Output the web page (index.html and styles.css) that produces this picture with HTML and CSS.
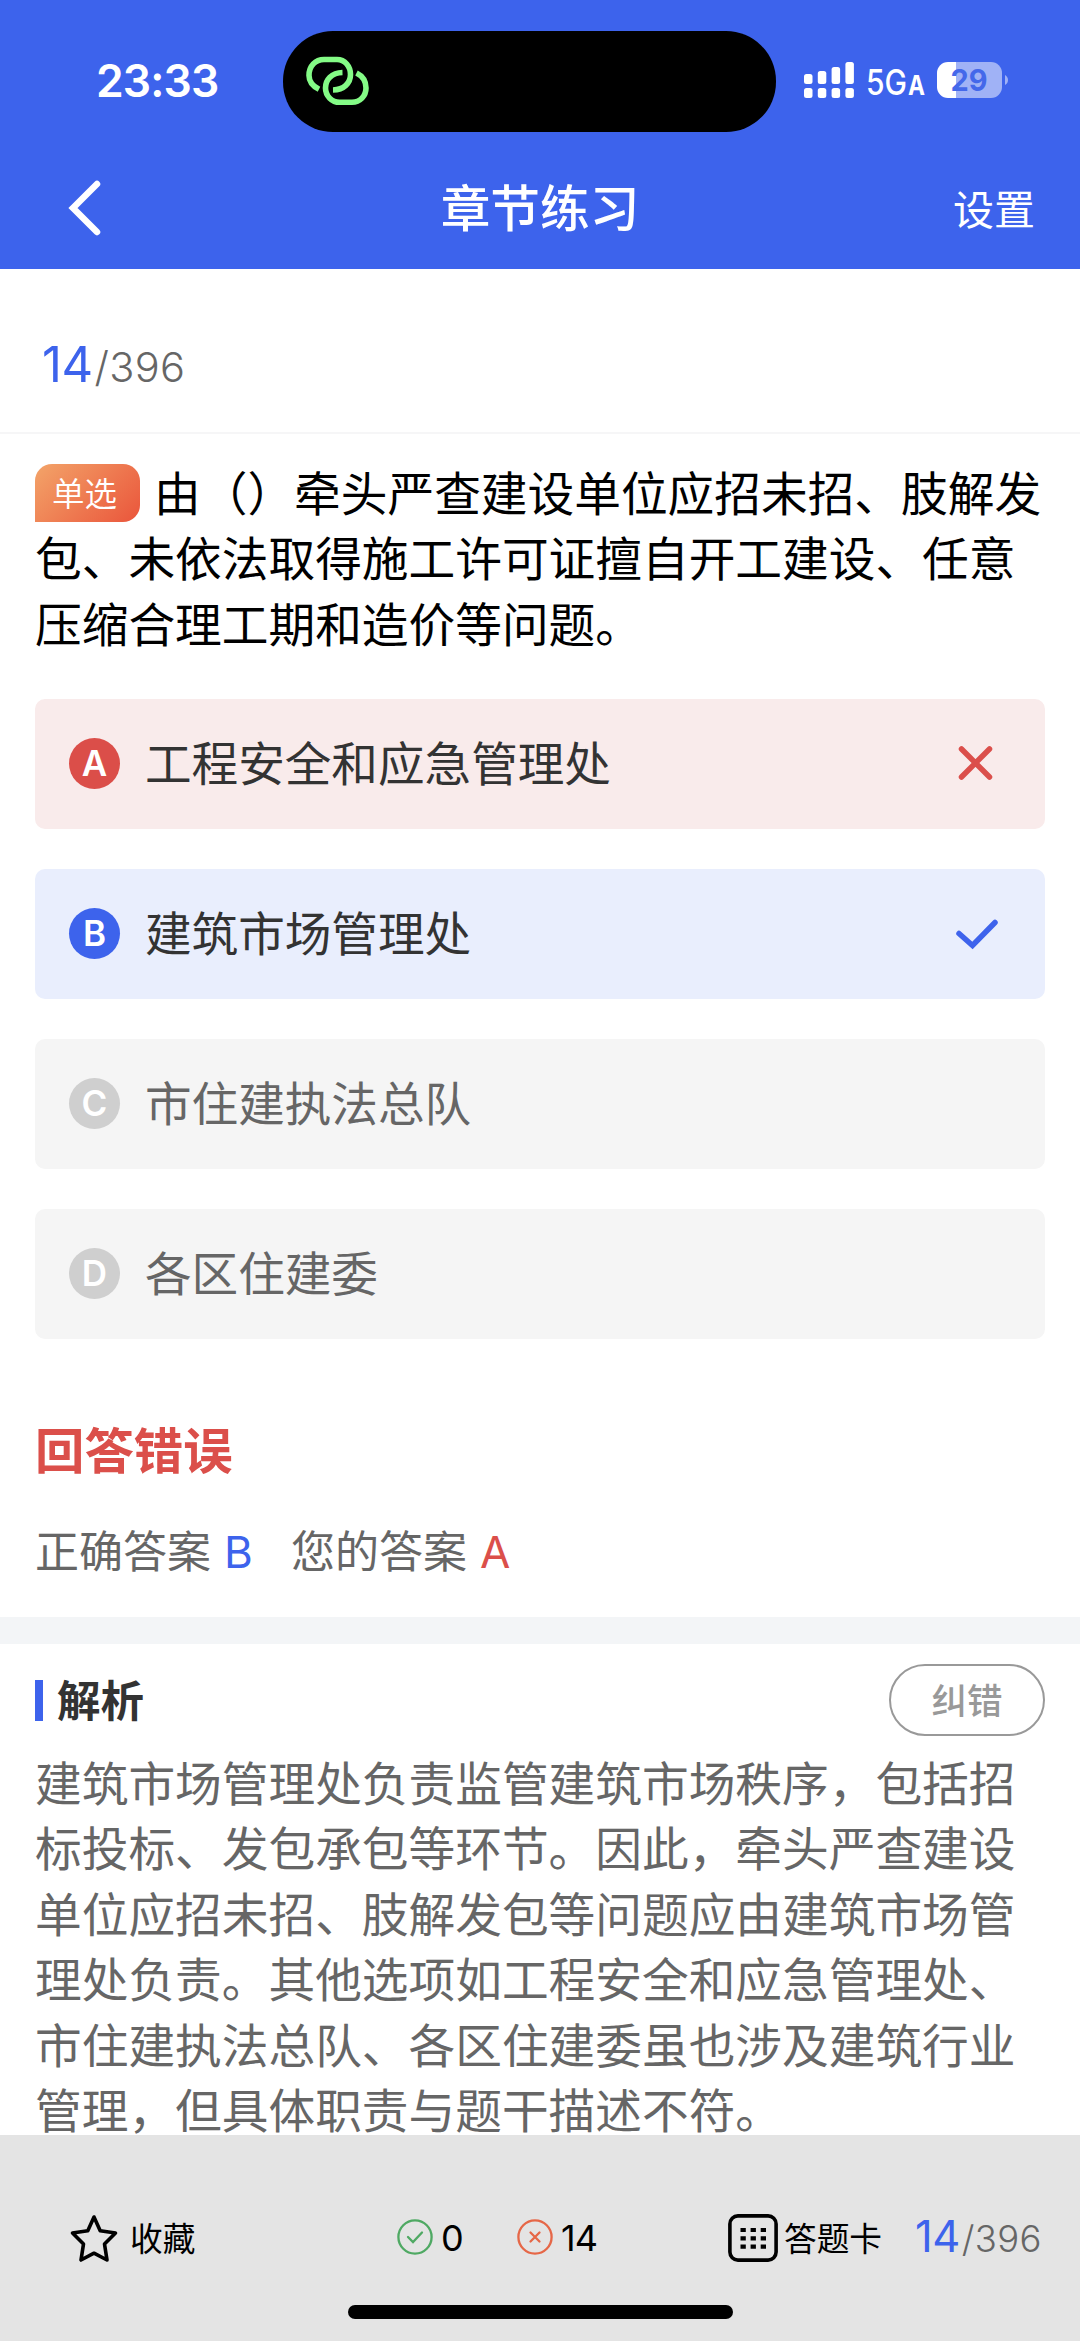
FILE: index.html
```html
<!DOCTYPE html>
<html lang="zh-CN">
<head>
<meta charset="utf-8">
<title>章节练习</title>
<link rel="stylesheet" href="styles.css">
</head>
<body>
<div class="app">
  <header class="header">
    <div class="status">
      <span class="clock">23:33</span>
      <div class="island">
        <svg class="link" width="64" height="50" viewBox="0 0 64 50" fill="none" stroke="#84fb86" stroke-width="5.6">
          <path d="M13 33.3C6.500 30 3 25 3 19.500C3 10 9.500 3.500 18 3.500H31C39 3.500 44.500 10.500 44.500 18.500C44.500 27 38 33.800 27 34"/>
          <path d="M36.500 16.500C25.500 16.700 19.500 24 19.500 32C19.500 40 26 46.300 33.500 46.300H46C54 46.300 60 40 60 32C60 25 56.500 20 50.500 17"/>
        </svg>
      </div>
      <svg class="signal" width="50" height="36" viewBox="0 0 50 36" fill="#fff">
        <rect x="0" y="12" width="8.500" height="10" rx="2.500"/><rect x="13.800" y="9" width="8.500" height="13" rx="2.500"/>
        <rect x="27.600" y="5" width="8.500" height="17" rx="2.500"/><rect x="41.400" y="0" width="8.500" height="22" rx="2.500"/>
        <rect x="0" y="26" width="8.500" height="10" rx="2.500"/><rect x="13.800" y="26" width="8.500" height="10" rx="2.500"/>
        <rect x="27.600" y="26" width="8.500" height="10" rx="2.500"/><rect x="41.400" y="26" width="8.500" height="10" rx="2.500"/>
      </svg>
      <svg class="network" width="60" height="36" viewBox="0 0 60 36" fill="#fff">
        <text x="0" y="33" font-size="35.500" textLength="41" lengthAdjust="spacingAndGlyphs">5G</text>
        <text class="semi" x="42" y="33" font-size="27" textLength="17" lengthAdjust="spacingAndGlyphs">A</text>
      </svg>
      <svg class="battery" width="72" height="36" viewBox="0 0 72 36">
        <path d="M11 0H19V36H11A11 11 0 0 1 0 25V11A11 11 0 0 1 11 0Z" fill="#fff"/>
        <path d="M19 0H54A11 11 0 0 1 65 11V25A11 11 0 0 1 54 36H19Z" fill="#a0b2f6"/>
        <path d="M68 13C72 15 72 21 68 23Z" fill="#a0b2f6"/>
        <text class="semi" x="13.500" y="29" font-size="30" fill="#4468ea" textLength="37" lengthAdjust="spacingAndGlyphs">29</text>
      </svg>
    </div>
    <nav class="nav">
      <svg class="back" width="34" height="56" viewBox="0 0 34 56" fill="none" stroke="#fff" stroke-width="6.500" stroke-linecap="round"><path d="M29 4L5 28L29 52"/></svg>
      <h1 class="title">章节练习</h1>
      <span class="settings">设置</span>
    </nav>
  </header>

  <main class="content">
    <div class="progress"><span class="now">14</span><span class="all">/396</span></div>

    <section class="question">
      <p class="stem"><span class="tag">单选</span>由（）牵头严查建设单位应招未招、肢解发包、未依法取得施工许可证擅自开工建设、任意压缩合理工期和造价等问题。</p>
      <ul class="options">
        <li class="option wrong"><span class="letter">A</span><span class="label">工程安全和应急管理处</span>
          <svg class="mark" width="44" height="44" viewBox="0 0 44 44" fill="none" stroke="#db4f4b" stroke-width="5.500" stroke-linecap="round"><path d="M7.500 7L35.500 35M35.500 7L7.500 35"/></svg></li>
        <li class="option right"><span class="letter">B</span><span class="label">建筑市场管理处</span>
          <svg class="mark" width="44" height="44" viewBox="0 0 44 44" fill="none" stroke="#3e63ec" stroke-width="5.500" stroke-linecap="round"><path d="M5 21.500L18.500 33.500L41 10.500"/></svg></li>
        <li class="option"><span class="letter">C</span><span class="label">市住建执法总队</span></li>
        <li class="option"><span class="letter">D</span><span class="label">各区住建委</span></li>
      </ul>
      <h2 class="verdict">回答错误</h2>
      <div class="answers">
        <span>正确答案</span><b class="correct">B</b><span>您的答案</span><b class="yours">A</b>
      </div>
    </section>

    <section class="analysis">
      <div class="analysis-head">
        <h3 class="analysis-title"><span>解析</span></h3>
        <button class="report">纠错</button>
      </div>
      <p class="analysis-text">建筑市场管理处负责监管建筑市场秩序，包括招标投标、发包承包等环节。因此，牵头严查建设单位应招未招、肢解发包等问题应由建筑市场管理处负责。其他选项如工程安全和应急管理处、市住建执法总队、各区住建委虽也涉及建筑行业管理，但具体职责与题干描述不符。</p>
    </section>
  </main>

  <footer class="footer">
    <div class="toolbar">
      <svg class="star" width="48" height="48" viewBox="0 0 48 48" fill="none" stroke="#000" stroke-width="3.600" stroke-linejoin="round"><path d="M24 3L30.200 16.700L45.500 19L34.500 30L37 46L24 39.200L11 46L13.500 30L2.500 19L17.800 16.700Z"/></svg>
      <span class="tool fav">收藏</span>
      <svg width="36" height="36" viewBox="0 0 36 36" fill="none" stroke="#4fa963" stroke-width="2.300" stroke-linecap="round"><circle cx="18" cy="17" r="16.600"/><path d="M11 17L16 22L25 12.500"/></svg>
      <span class="count ok">0</span>
      <svg width="36" height="36" viewBox="0 0 36 36" fill="none" stroke="#e66747" stroke-width="2.300" stroke-linecap="round"><circle cx="18" cy="17" r="16.600"/><path d="M13.500 12.500L22.500 21.500M22.500 12.500L13.500 21.500"/></svg>
      <span class="count bad">14</span>
      <svg width="50" height="48" viewBox="0 0 50 48"><rect x="1.900" y="1.900" width="46.200" height="44.200" rx="8" fill="none" stroke="#000" stroke-width="3.600"/>
        <path d="M12.500 16H38.500M12.500 24.300H38.500M12.500 32.600H38.500" stroke="#000" stroke-width="4.200" stroke-dasharray="5.300 4.800"/></svg>
      <span class="tool card">答题卡</span>
      <span class="progress-small"><span class="now">14</span><span class="all">/396</span></span>
    </div>
    <div class="home"></div>
  </footer>
</div>
</body>
</html>
```
FILE: styles.css
```css
* { box-sizing: border-box; margin: 0; padding: 0; }
body {
  width: 1080px;
  font-family: "Noto Sans CJK SC", sans-serif;
  text-spacing-trim: space-all;
  color: #000;
  background: #fff;
}
.app { display: flex; flex-direction: column; height: 2341px; overflow: hidden; }
svg { display: block; flex: none; overflow: visible; }
svg text { font-family: Inter, sans-serif; font-weight: 500; }
svg .semi { font-weight: 650; }

/* header */
.header { flex: none; height: 269px; background: #3d63ec; color: #fff; }
.status { display: flex; align-items: flex-start; height: 139px; padding-top: 31px; }
.clock { width: 187px; margin: 23px 0 0 96px; font: 560 44.500px/54px Inter, sans-serif; letter-spacing: -0.9px; }
.island { width: 493px; height: 101px; border-radius: 50px; background: #000; padding: 25px 0 0 23px; }
.signal { margin: 31px 0 0 28px; }
.network { margin: 31px 0 0 12px; }
.battery { margin: 31px 0 0 11px; }
.nav { display: grid; grid-template-columns: 200px 1fr 200px; align-items: center; height: 138px; }
.back { margin-left: 68px; }
.title { text-align: center; font-size: 49.700px; line-height: 72px; font-weight: 500; margin-top: -6px; }
.settings { justify-self: end; margin-right: 45px; font-size: 41px; line-height: 60px; margin-top: -2px; }

/* content */
.content { flex: 1; min-height: 0; overflow: hidden; }
.progress { height: 165px; padding: 66px 0 0 42px; border-bottom: 2px solid #f6f6f7; font-family: Inter, sans-serif; line-height: 60px; white-space: nowrap; }
.now { color: #3d63ec; font-size: 49px; font-weight: 400; letter-spacing: -0.5px; }
.all { margin-left: 2px; color: #666; font-size: 41.500px; font-weight: 340; letter-spacing: 0.3px; }
.question { padding: 24px 35px 0; height: 1183px; }
.stem { font-size: 46.700px; line-height: 65.400px; height: 241px; }
.tag {
  display: inline-block; width: 105px; height: 58px; padding-left: 17px; margin-right: 14px; vertical-align: 5px;
  border-radius: 17px 17px 17px 0; background: linear-gradient(135deg, #f3a469, #ea553b);
  color: #fff; font-size: 32.500px; line-height: 55px; font-weight: 350;
}
.options { list-style: none; display: grid; grid-auto-rows: 130px; gap: 40px; }
.option { display: flex; align-items: center; padding: 0 34px; border-radius: 10px; background: #f5f5f5; color: #666; }
.letter { width: 51px; height: 51px; margin-top: -2px; border-radius: 50%; background: #cfcfcf; color: #fff; text-align: center; font: 560 35px/51px Inter, sans-serif; }
.label { flex: 1; margin: -6px 0 0 25px; font-size: 46.600px; line-height: 66px; }
.mark { margin-right: 13px; }
.wrong { background: #f9ebeb; color: #333; }
.wrong .letter { background: #db4e49; }
.right { background: #e9eefd; color: #333; }
.right .letter { background: #3d63ec; }
.verdict { margin-top: 74px; color: #db4f4a; font-size: 49.400px; line-height: 70px; font-weight: 700; }
.answers { display: flex; align-items: baseline; margin-top: 34px; color: #666; font-size: 44px; line-height: 64px; }
.answers b { font-family: Inter, sans-serif; font-weight: 400; font-size: 44px; }
.correct { width: 67px; margin-left: 13px; color: #3d63ec; }
.yours { margin-left: 13px; color: #db4f4a; }

.analysis { border-top: 27px solid #f3f5f7; padding: 20px 35px 0; }
.analysis-head { display: flex; justify-content: space-between; align-items: center; height: 72px; }
.analysis-title { display: flex; align-items: center; gap: 14px; color: #333; font-size: 43.500px; line-height: 64px; font-weight: 700; }
.analysis-title::before { content: ""; width: 8px; height: 41px; background: #3d63ec; }
.analysis-title span { margin-top: -3px; }
.report { width: 156px; height: 72px; padding-bottom: 3px; border: 2.500px solid #999; border-radius: 36px; background: none; color: #999; font: 500 35.500px/60px "Noto Sans CJK SC", sans-serif; }
.analysis-text { margin-top: 12px; color: #666; font-size: 46.700px; line-height: 65.400px; }

/* footer */
.footer { flex: none; height: 206px; background: #e4e4e4; padding-top: 79px; }
.toolbar { display: flex; align-items: center; height: 48px; padding-left: 70px; }
.toolbar > * { flex: none; }
.tool { font-size: 32.700px; line-height: 48px; margin-top: -2px; white-space: nowrap; }
.fav { width: 279px; padding-left: 12px; }
.count { font: 400 36px/48px Inter, sans-serif; letter-spacing: -1px; }
.ok { width: 84px; padding-left: 8px; }
.bad { width: 175px; padding-left: 8px; }
.card { width: 137px; padding-left: 6px; }
.progress-small { margin-top: 6px; font-family: Inter, sans-serif; line-height: 48px; white-space: nowrap; }
.progress-small .now { font-size: 43.500px; }
.progress-small .all { font-size: 36.500px; }
.home { width: 385px; height: 14px; margin: 43px auto 0; border-radius: 7px; background: #000; }
```
